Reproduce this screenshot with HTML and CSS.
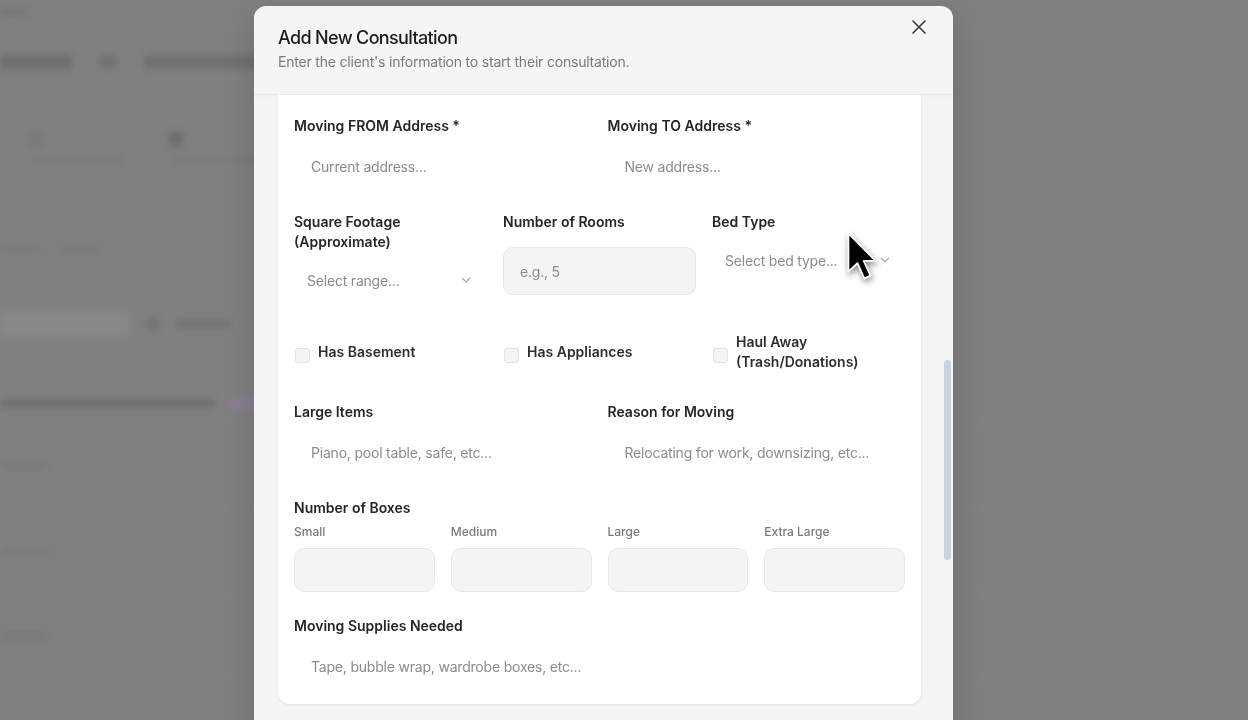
FILE: index.html
```html
<!DOCTYPE html>
<html lang="en">
<head>
    <meta charset="UTF-8">
    <meta name="viewport" content="width=device-width, initial-scale=1.0">
    <title>Add New Consultation</title>
    <link rel="stylesheet" href="styles.css">
</head>
<body>
    <!-- blurred page behind the dialog -->
    <div class="backdrop">
        <div class="bd-crumb"></div>
        <div class="bd-title"><span class="t1"></span><span class="dot"></span><span class="t2"></span></div>
        <div class="bd-tabs">
            <div class="bd-tab"><i></i><span></span></div>
            <div class="bd-tab"><i class="dark"></i><span></span></div>
        </div>
        <div class="bd-meta"><span></span><span></span></div>
        <div class="bd-search"><span class="box"></span><span class="ico"></span><span class="txt"></span></div>
        <div class="bd-head"><span class="long"></span><span class="pill"></span></div>
        <div class="bd-row"><span></span></div>
        <div class="bd-row"><span></span></div>
        <div class="bd-row"><span></span></div>
    </div>

    <div class="modal">
        <div class="modal-head">
            <h2>Add New Consultation</h2>
            <p>Enter the client's information to start their consultation.</p>
            <button class="close" aria-label="Close">
                <svg width="16" height="16" viewBox="0 0 16 16"><path d="M2 2 L14 14 M14 2 L2 14" stroke="#3a3a3a" stroke-width="1.6" stroke-linecap="round" fill="none"/></svg>
            </button>
        </div>

        <div class="modal-body">
            <div class="card">
                <div class="grid two">
                    <div class="field">
                        <label>Moving FROM Address *</label>
                        <input class="text" type="text" placeholder="Current address...">
                    </div>
                    <div class="field">
                        <label>Moving TO Address *</label>
                        <input class="text" type="text" placeholder="New address...">
                    </div>
                </div>

                <div class="grid three">
                    <div class="field">
                        <label>Square Footage (Approximate)</label>
                        <div class="select">Select range...
                            <svg width="10" height="6" viewBox="0 0 10 6"><path d="M1 1 L5 5 L9 1" stroke="#a6a6a6" stroke-width="1.2" fill="none"/></svg>
                        </div>
                    </div>
                    <div class="field">
                        <label>Number of Rooms</label>
                        <input class="num" type="number" placeholder="e.g., 5">
                    </div>
                    <div class="field">
                        <label>Bed Type</label>
                        <div class="select bed">Select bed type...
                            <svg width="10" height="6" viewBox="0 0 10 6"><path d="M1 1 L5 5 L9 1" stroke="#a6a6a6" stroke-width="1.2" fill="none"/></svg>
                        </div>
                    </div>
                </div>

                <div class="grid three checks">
                    <div class="check"><span class="box"></span><span>Has Basement</span></div>
                    <div class="check"><span class="box"></span><span>Has Appliances</span></div>
                    <div class="check"><span class="box"></span><span>Haul Away (Trash/Donations)</span></div>
                </div>

                <div class="grid two">
                    <div class="field">
                        <label>Large Items</label>
                        <input class="text" type="text" placeholder="Piano, pool table, safe, etc...">
                    </div>
                    <div class="field">
                        <label>Reason for Moving</label>
                        <input class="text" type="text" placeholder="Relocating for work, downsizing, etc...">
                    </div>
                </div>

                <div class="boxes">
                    <div class="section-label">Number of Boxes</div>
                    <div class="grid four">
                        <div class="sub"><label>Small</label><input class="count" type="number"></div>
                        <div class="sub"><label>Medium</label><input class="count" type="number"></div>
                        <div class="sub"><label>Large</label><input class="count" type="number"></div>
                        <div class="sub"><label>Extra Large</label><input class="count" type="number"></div>
                    </div>
                </div>

                <div class="field">
                    <label>Moving Supplies Needed</label>
                    <input class="text" type="text" placeholder="Tape, bubble wrap, wardrobe boxes, etc...">
                </div>
            </div>
            <div class="thumb"></div>
        </div>
    </div>

    <svg class="cursor" width="32" height="52" viewBox="0 0 28 46">
        <path d="M2 2 L2 36 L10 28.5 L16 42 L21.5 39.5 L15.5 26.5 L26 26.5 Z" fill="#000" stroke="#fff" stroke-width="1.6" stroke-linejoin="round"/>
    </svg>
</body>
</html>
```

FILE: styles.css
```css
body {
    margin: 0;
    height: 720px;
    overflow: hidden;
    background-color: #808080;
    font-family: Inter, "Noto Sans", sans-serif;
}

/* backdrop */
.backdrop {
    filter: blur(3px);
    padding-top: 8px;
}
.backdrop span, .backdrop i {
    display: block;
}
.bd-crumb {
    width: 28px;
    height: 7px;
    background-color: #767676;
}
.bd-title {
    display: flex;
    align-items: center;
    gap: 28px;
    margin-top: 40px;
}
.bd-title .t1 {
    width: 72px;
    height: 14px;
    background-color: #6e6e6e;
}
.bd-title .dot {
    width: 16px;
    height: 14px;
    background-color: #727272;
}
.bd-title .t2 {
    width: 130px;
    height: 14px;
    background-color: #707070;
}
.bd-tabs {
    display: flex;
    gap: 40px;
    margin-top: 62px;
    padding-left: 28px;
}
.bd-tab {
    width: 100px;
}
.bd-tab i {
    width: 16px;
    height: 16px;
    background-color: #7a7a7a;
    border-radius: 4px;
}
.bd-tab i.dark {
    background-color: #6c6c6c;
    border-radius: 50%;
}
.bd-tab span {
    width: 90px;
    height: 6px;
    margin-top: 10px;
    margin-left: 6px;
    background-color: #7a7a7a;
}
.bd-meta {
    display: flex;
    gap: 20px;
    margin-top: 84px;
}
.bd-meta span {
    width: 40px;
    height: 6px;
    background-color: #797979;
}
.bd-search {
    display: flex;
    align-items: center;
    gap: 16px;
    margin-top: 58px;
}
.bd-search .box {
    width: 130px;
    height: 26px;
    background-color: #878787;
}
.bd-search .ico {
    width: 14px;
    height: 14px;
    border-radius: 50%;
    background-color: #727272;
}
.bd-search .txt {
    width: 55px;
    height: 8px;
    background-color: #717171;
}
.bd-head {
    display: flex;
    align-items: center;
    gap: 14px;
    margin-top: 60px;
    padding-bottom: 14px;
    border-bottom: 1px solid #878787;
}
.bd-head .long {
    width: 215px;
    height: 9px;
    background-color: #707070;
}
.bd-head .pill {
    width: 36px;
    height: 12px;
    border-radius: 6px;
    background-color: #8a7f95;
}
.bd-row {
    height: 84px;
    display: flex;
    align-items: center;
    border-bottom: 1px solid #878787;
}
.bd-row span {
    width: 48px;
    height: 7px;
    background-color: #797979;
}

/* dialog */
.modal {
    position: fixed;
    left: 254px;
    top: 6px;
    width: 699px;
    height: 740px;
    display: flex;
    flex-direction: column;
    background-color: #f5f5f5;
    border-radius: 12px;
    overflow: hidden;
    box-shadow: 0 10px 30px rgba(0,0,0,0.18);
}
.modal-head {
    position: relative;
    padding: 18px 24px 22px;
    border-bottom: 1px solid #e8e8e8;
    box-shadow: 0 1px 3px rgba(0,0,0,0.04);
}
.modal-head h2 {
    margin: 0;
    font-size: 18px;
    line-height: 28px;
    font-weight: 500;
    letter-spacing: -0.65px;
    color: #1c1c1c;
}
.modal-head p {
    margin: 0;
    font-size: 14px;
    line-height: 20px;
    color: #7a7a7a;
    letter-spacing: -0.2px;
}
.close {
    position: absolute;
    top: 13px;
    right: 26px;
    padding: 0;
    border: none;
    background: none;
    cursor: pointer;
}
.modal-body {
    position: relative;
    flex: 1;
    padding: 0 32px 0 24px;
}
.card {
    background-color: #fff;
    border-radius: 0 0 12px 12px;
    padding: 21px 16px 16px;
    box-shadow: 0 1px 3px rgba(0,0,0,0.08);
}
.card > * + * {
    margin-top: 24px;
}
.card > .checks {
    margin-top: 32px;
}
.card > .checks + .grid {
    margin-top: 30px;
}
.grid {
    display: grid;
    gap: 16px;
}
.two {
    grid-template-columns: 1fr 1fr;
}
.three {
    grid-template-columns: 1fr 1fr 1fr;
}
.four {
    grid-template-columns: 1fr 1fr 1fr 1fr;
}
.field label, .section-label {
    display: block;
    font-size: 14px;
    line-height: 20px;
    font-weight: 600;
    color: #262626;
    margin-bottom: 8px;
}
.section-label {
    margin-bottom: 6px;
}
input {
    font-family: inherit;
    font-size: 14px;
    color: #222;
    box-sizing: border-box;
    width: 100%;
    outline: none;
}
input::placeholder {
    color: #8c8c8c;
    letter-spacing: -0.2px;
}
.text {
    display: block;
    height: 44px;
    padding: 0 17px;
    border: none;
    background: transparent;
}
.num {
    display: block;
    height: 48px;
    margin-top: 15px;
    padding: 0 16px;
    background-color: #f4f4f4;
    border: 1px solid #e6e6e6;
    border-radius: 10px;
}
.select {
    height: 40px;
    display: flex;
    align-items: center;
    justify-content: space-between;
    padding: 0 16px 0 13px;
    font-size: 14px;
    letter-spacing: -0.2px;
    color: #8c8c8c;
}
.select.bed {
    padding-right: 15px;
}
.checks {
    align-items: center;
}
.check {
    display: flex;
    align-items: center;
    gap: 8px;
    font-size: 14px;
    line-height: 20px;
    font-weight: 600;
    color: #2e2e2e;
}
.check .box {
    flex: none;
    width: 13px;
    height: 13px;
    margin: 7px 0 0 1px;
    background-color: #f4f4f4;
    border: 1px solid #e3e3e3;
    border-radius: 3px;
}
.sub label {
    display: block;
    font-size: 12px;
    line-height: 16px;
    font-weight: 500;
    color: #7a7a7a;
    margin-bottom: 8px;
}
.count {
    display: block;
    height: 44px;
    background-color: #f4f4f4;
    border: 1px solid #e8e8e8;
    border-radius: 10px;
}
.thumb {
    position: absolute;
    right: 2px;
    top: 265px;
    width: 7px;
    height: 200px;
    border-radius: 4px;
    background-color: #cad2de;
}
.cursor {
    position: fixed;
    left: 846px;
    top: 231px;
    filter: drop-shadow(1px 3px 3px rgba(0,0,0,0.45));
}
```
